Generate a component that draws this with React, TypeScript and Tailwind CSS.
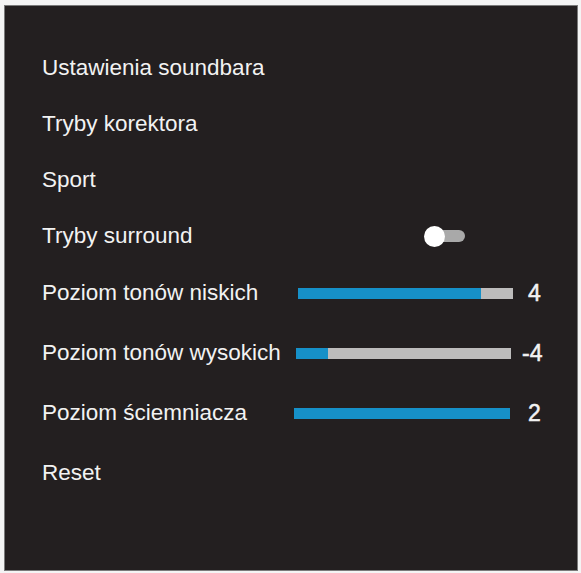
import React from "react";

const font = { fontFamily: '"Liberation Sans", Arial, sans-serif' };

function Bar({ pct, width = 216 }: { pct: number; width?: number }) {
  return (
    <div className="h-[11px] bg-[#bdbcbc] flex" style={{ width }}>
      <div className="h-full bg-[#1690c8]" style={{ width: `${pct}%` }} />
    </div>
  );
}

export default function App() {
  return (
    <div className="w-[581px] h-[573px] bg-[#f4f4f4] pt-[5px] pl-[4px]" style={font}>
      <div className="w-[574px] h-[566px] bg-[#231f20] border border-[#7a7a7a] pl-[37px] pt-[34px] text-[#f2f2f2] text-[22.5px] leading-none">
        <div className="h-[56px] flex items-center">Ustawienia soundbara</div>
        <div className="h-[56px] flex items-center">Tryby korektora</div>
        <div className="h-[56px] flex items-center">Sport</div>
        <div className="h-[56px] flex items-center">
          <div className="w-[380px]">Tryby surround</div>
          <div className="relative ml-[2px] w-[44px] h-[20px] flex items-center">
            <div className="absolute left-[12px] w-[29px] h-[12px] rounded-full bg-[#a9a9a9]" />
            <div className="absolute left-0 w-[21px] h-[21px] rounded-full bg-white" />
          </div>
        </div>
        <div className="h-[58px] flex items-center">
          <div className="w-[256px]">Poziom tonów niskich</div>
          <Bar pct={85} width={215} />
          <div className="ml-[15px] text-[23px] [-webkit-text-stroke:0.5px_#f2f2f2]">4</div>
        </div>
        <div className="h-[62px] flex items-center">
          <div className="w-[254px]">Poziom tonów wysokich</div>
          <Bar pct={15} width={215} />
          <div className="ml-[11px] text-[23px] [-webkit-text-stroke:0.5px_#f2f2f2]">-4</div>
        </div>
        <div className="h-[58px] flex items-center">
          <div className="w-[252px]">Poziom ściemniacza</div>
          <Bar pct={100} width={216} />
          <div className="ml-[18px] text-[23px] [-webkit-text-stroke:0.5px_#f2f2f2]">2</div>
        </div>
        <div className="h-[62px] flex items-center">Reset</div>
      </div>
    </div>
  );
}
